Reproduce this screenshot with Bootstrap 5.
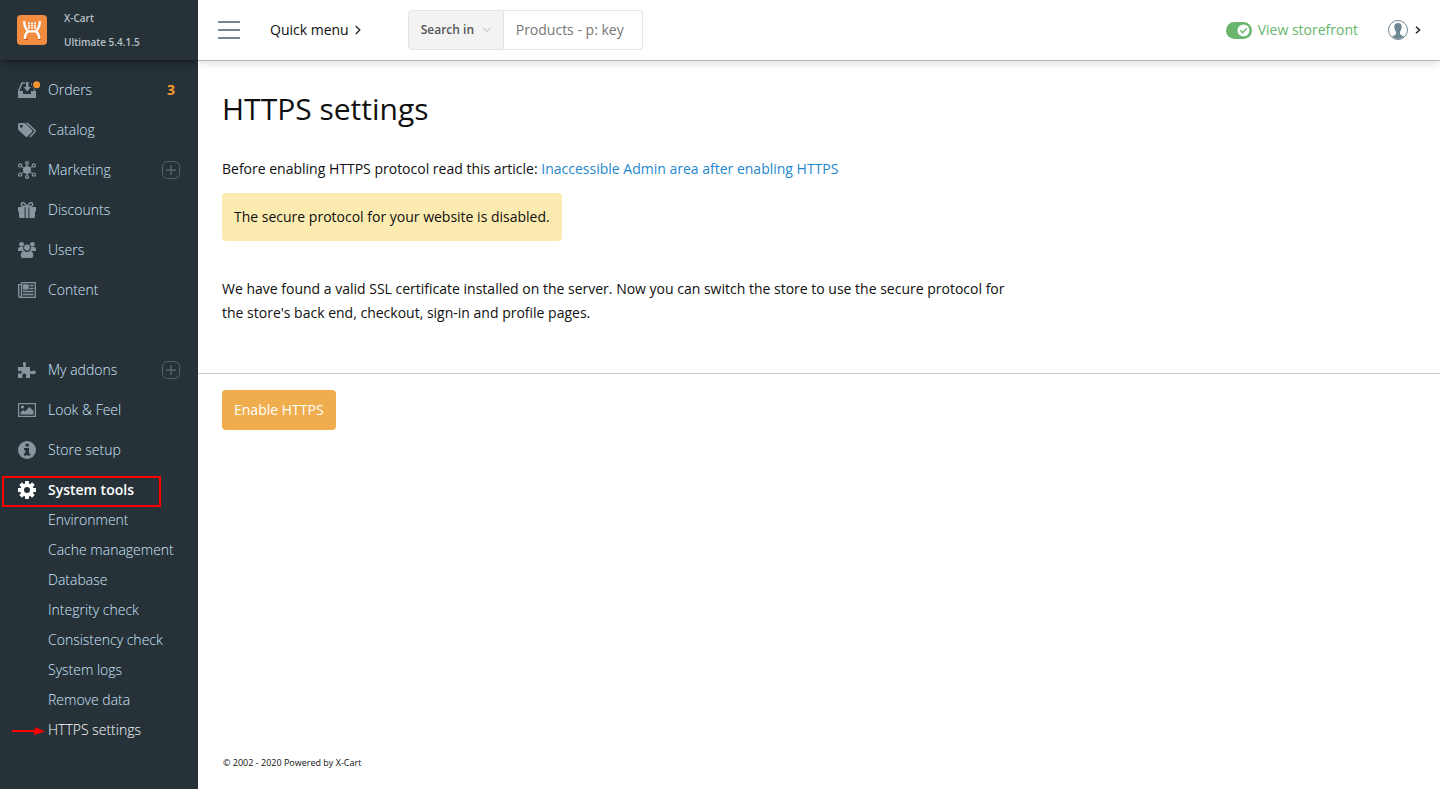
<!DOCTYPE html>
<html lang="en">
<head>
<meta charset="utf-8">
<meta name="viewport" content="width=device-width, initial-scale=1">
<title>HTTPS settings</title>
<link href="https://cdn.jsdelivr.net/npm/bootstrap@5.3.0/dist/css/bootstrap.min.css" rel="stylesheet">
<style>
  body { font-family: "Open Sans", "Noto Sans", sans-serif; font-size: 14px; line-height: 24px; color: #0f0f0f; background: #fff; }
  a { text-decoration: none; }

  /* left menu */
  .side { width: 198px; background: #263238; overflow: hidden; z-index: 1; }
  .side-head { height: 60px; padding: 0 17px; gap: 17px; box-shadow: 0 2px 8px rgba(0,0,0,.5); font-size: 10px; font-weight: 600; color: #b7c0c9; }
  .side-menu { padding-top: 10px; }
  .side-link { height: 40px; padding: 0 18px; gap: 12px; color: #cfe5fd; font-weight: 300; }
  .side-link:hover, .sub-link:hover { color: #fff; }
  .side-link svg { color: #8a949e; }
  .side-link .inbox { margin-right: -5px; }
  .side-link .plus { color: #56636b; }
  .side-link.current { color: #fff; font-weight: 600; }
  .side-link.current svg { color: #fff; }
  .count { color: #f69c31; font-weight: 700; padding-right: 5px; }
  .second { margin-top: 40px; }
  .sub-menu { margin-top: -5px; }
  .sub-link { height: 30px; padding-left: 48px; color: #cfe5fd; font-weight: 300; }
  .sub-link.current { color: #fff; }
  .callout-box { left: 2px; top: 6px; width: 159px; height: 31px; border: 2px solid #f00; pointer-events: none; }
  .callout-arrow { left: 12px; top: 11px; }

  /* top bar */
  .topbar { height: 61px; padding: 0 20px; border-bottom: 1px solid #b5b5b5; box-shadow: 0 2px 8px rgba(0,0,0,.14); }
  .plain-btn { border: 0; padding: 0; background: none; color: inherit; }
  .quick { gap: 6px; margin-left: 30px; margin-right: 47px; }
  .search { width: 235px; height: 40px; }
  .search-in { width: 96px; padding: 0 12px; border: 1px solid #e5e5e5; border-radius: 4px 0 0 4px; background: #f3f3f3; color: #555; font-size: 12px; font-weight: 600; }
  .search-text { min-width: 0; padding: 0 12px; border: 1px solid #e5e5e5; border-left: 0; border-radius: 0 4px 4px 0; color: #333; }
  .search-text::placeholder { color: #777; opacity: 1; }
  .storefront { color: #69b56e; gap: 6px; margin-right: 30px; }

  /* page */
  .page { padding: 30px 24px 48px; }
  .page-title { font-size: 30px; line-height: 36px; font-weight: 400; margin-bottom: 30px; }
  .page p { max-width: 800px; margin-bottom: 12px; }
  .page a { color: #1f87cc; }
  .notice { width: fit-content; padding: 12px; border-radius: 4px; background: #fcebb0; margin-bottom: 36px; }
  .page .found { margin-bottom: 0; }
  .actions { border-top: 1px solid #c6c6c6; padding: 16px 24px; }
  .enable { height: 40px; padding: 0 12px; border: 0; border-radius: 4px; background: #f0ad4e; color: #fff; font-size: 14px; line-height: 20px; }
  .enable:hover { background: #ec9c2e; color: #fff; }
  .foot { padding: 0 25px 14px; font-size: 9px; }
</style>
</head>
<body>
<div class="d-flex min-vh-100">

  <aside class="side flex-shrink-0 position-relative">
    <div class="side-head d-flex align-items-center">
      <svg width="30" height="30" viewBox="0 0 30 30" aria-hidden="true">
        <rect width="30" height="30" rx="4" fill="#f28c40"/>
        <path d="M7.300 23.500h3.200v1.500H6.500zM20.500 23.500h3l.5 1.500h-3z" fill="#b45c30"/>
        <path d="M7.200 6.200Q7.200 12 10.500 15.500M22.800 6.200Q22.800 12 19.500 15.500M9.500 16.400h11M10.800 16.800Q7.800 19 7.800 24M19.200 16.800Q22.200 19 22.200 24" fill="none" stroke="#fff" stroke-width="2.300"/>
        <path d="M11 8.200h8M11 10.600h8M11 13h8" stroke="#fff" stroke-width="1.600" stroke-dasharray="2 1"/>
      </svg>
      <div>X-Cart<br>Ultimate 5.4.1.5</div>
    </div>

    <nav class="side-menu" aria-label="Main">
      <a href="#" class="side-link d-flex align-items-center">
        <svg class="inbox" width="23" height="18" viewBox="0 0 23 18" fill="currentColor">
          <path d="M0 10h5v3h8v-3h5v7H0z"/>
          <path d="M.7 10L4 2h3M13.500 2.500l3.500 7" fill="none" stroke="currentColor" stroke-width="1.500"/>
          <path d="M8 1h2.500v5H13l-3.800 4.500L5.500 6H8z"/>
          <circle cx="18.600" cy="3.800" r="4.800" fill="#263238"/><circle cx="18.600" cy="3.800" r="3.500" fill="#f69331"/>
        </svg>
        <span>Orders</span><span class="count ms-auto">3</span>
      </a>
      <a href="#" class="side-link d-flex align-items-center">
        <svg width="18" height="18" viewBox="0 0 18 18" fill="currentColor">
          <path fill-rule="evenodd" d="M0 3.500Q0 2 1.500 2H6q1 0 2 1l6 6q1 1 0 2l-4.500 4.500q-1 1-2 0L1 9.500Q0 8.500 0 7.500zM3.300 3.700a1.500 1.500 0 1 0 .01 0z"/>
          <path d="M8.500 2.200q1 0 2 1l6.200 6q1 1 0 1.900l-4.600 4.800" fill="none" stroke="currentColor" stroke-width="1.500"/>
        </svg>
        <span>Catalog</span>
      </a>
      <a href="#" class="side-link d-flex align-items-center">
        <svg width="18" height="18" viewBox="0 0 18 18" fill="none" stroke="currentColor">
          <path d="M9 3v12M3.500 5.500l11 7M14.500 5.500l-11 7"/>
          <circle cx="9" cy="9" r="3.600" fill="currentColor"/>
          <g stroke-width="1.200"><circle cx="9" cy="2" r="1.400"/><circle cx="9" cy="16" r="1.400"/><circle cx="2.200" cy="4.400" r="1.600"/><circle cx="15.800" cy="4.400" r="1.600"/><circle cx="2.200" cy="13.600" r="1.600"/><circle cx="15.800" cy="13.600" r="1.600"/></g>
        </svg>
        <span>Marketing</span>
        <svg class="plus ms-auto" width="18" height="18" viewBox="0 0 18 18" fill="none" stroke="currentColor"><rect x=".5" y=".5" width="17" height="17" rx="5"/><path d="M9 4v10M4 9h10" stroke-width="1.400"/></svg>
      </a>
      <a href="#" class="side-link d-flex align-items-center">
        <svg width="18" height="18" viewBox="0 0 18 18" fill="currentColor">
          <path d="M0 6h18v4.500H0zM1 10h6v7H2.500Q1 17 1 15.500zM11 10h6v5.500q0 1.500-1.500 1.500H11z"/>
          <path d="M6.600 6h4.800v11H6.600z" fill="#263238"/><path d="M7.600 6h2.800v11H7.600z"/>
          <path d="M9 6Q7 1.500 5 1.700 3 2 3.300 4 3.700 5.600 9 5.800M9 6q2-4.500 4-4.300 2 .3 1.700 2.300-.4 1.600-5.700 1.800" fill="none" stroke="currentColor" stroke-width="1.400"/>
        </svg>
        <span>Discounts</span>
      </a>
      <a href="#" class="side-link d-flex align-items-center">
        <svg width="18" height="18" viewBox="0 0 18 18" fill="currentColor">
          <circle cx="3.600" cy="3.300" r="2.400"/><circle cx="14.400" cy="3.300" r="2.400"/>
          <path d="M0 10V8q0-2 2-2h3q0 2 1 4zM18 10V8q0-2-2-2h-3q0 2-1 4z"/>
          <circle cx="9" cy="6.500" r="3.400" stroke="#263238" stroke-width=".7"/>
          <path d="M2.700 15q0-5 3.500-5Q9 12 11.800 10q3.500 0 3.500 5 0 2-2 2H4.700q-2 0-2-2z"/>
        </svg>
        <span>Users</span>
      </a>
      <a href="#" class="side-link d-flex align-items-center">
        <svg width="18" height="18" viewBox="0 0 18 18" fill="none" stroke="currentColor" stroke-width="1.300">
          <path d="M3.500 1.700h13.800v14.600H2Q.7 16.300.7 15V3.700h2M3.500 1.700V15q0 1-1.300 1.200"/>
          <rect x="5.500" y="4" width="4.500" height="4" fill="currentColor"/><path d="M11.500 4.500h4M11.500 7.500h4M5 10.500h10.500M5 13.500h10.500"/>
        </svg>
        <span>Content</span>
      </a>

      <a href="#" class="side-link second d-flex align-items-center">
        <svg width="18" height="18" viewBox="0 0 18 18" fill="currentColor">
          <path d="M0 6h5.300Q6 4.800 5 3.800 4.200 1.500 6.300 1q2.300.3 1.700 2.700Q7 4.800 7.800 6H12v4q1 .8 2.200 0 3.200-1.300 3.700 1.300-.2 2.500-3.500 1.700Q13 12.300 12 13v4H8.200q-.8-1.300 0-2.300.5-2-2-2.200-2.400.2-2 2.200.9 1 .1 2.300H0v-4.500q1.200-.7 2 .2 1.500.3 1.600-1.500-.2-1.700-1.700-1.300Q1 10.500 0 9.800z"/>
        </svg>
        <span>My addons</span>
        <svg class="plus ms-auto" width="18" height="18" viewBox="0 0 18 18" fill="none" stroke="currentColor"><rect x=".5" y=".5" width="17" height="17" rx="5"/><path d="M9 4v10M4 9h10" stroke-width="1.400"/></svg>
      </a>
      <a href="#" class="side-link d-flex align-items-center">
        <svg width="18" height="18" viewBox="0 0 18 18" fill="currentColor">
          <rect x=".6" y="2.600" width="16.800" height="12.800" fill="none" stroke="currentColor" stroke-width="1.200"/>
          <circle cx="4.500" cy="6" r="1.600"/><path d="M2.500 13.500v-2L5 9l2 1.500L11.500 6l4 4v3.500z"/>
        </svg>
        <span>Look &amp; Feel</span>
      </a>
      <a href="#" class="side-link d-flex align-items-center">
        <svg width="18" height="18" viewBox="0 0 18 18">
          <circle cx="9" cy="9" r="9" fill="currentColor"/>
          <path d="M7.500 2.800h3.400v2.700H7.500zM6 7h5v5.500h1.300v2H5.900v-2h1.300V9H6z" fill="#263238"/>
        </svg>
        <span>Store setup</span>
      </a>
      <a href="#" class="side-link current d-flex align-items-center position-relative">
        <svg width="18" height="18" viewBox="0 0 18 18" fill="none" stroke="currentColor">
          <circle cx="9" cy="9" r="4.900" stroke-width="3.800"/>
          <path d="M9 0v3M9 15v3M0 9h3M15 9h3M2.600 2.600l2.200 2.200M13.200 13.200l2.200 2.200M2.600 15.400l2.200-2.200M13.200 4.800l2.200-2.200" stroke-width="3.800"/>
        </svg>
        <span>System tools</span>
        <span class="callout-box position-absolute"></span>
      </a>
      <div class="sub-menu">
        <a href="#" class="sub-link d-flex align-items-center">Environment</a>
        <a href="#" class="sub-link d-flex align-items-center">Cache management</a>
        <a href="#" class="sub-link d-flex align-items-center">Database</a>
        <a href="#" class="sub-link d-flex align-items-center">Integrity check</a>
        <a href="#" class="sub-link d-flex align-items-center">Consistency check</a>
        <a href="#" class="sub-link d-flex align-items-center">System logs</a>
        <a href="#" class="sub-link d-flex align-items-center">Remove data</a>
        <a href="#" class="sub-link current d-flex align-items-center position-relative">HTTPS settings
          <svg class="callout-arrow position-absolute" width="33" height="10" viewBox="0 0 33 10" fill="#f00" aria-hidden="true"><path d="M0 4h23V1l10 4.500L22 9V6H0z"/></svg>
        </a>
      </div>
    </nav>
  </aside>

  <div class="flex-grow-1 d-flex flex-column">
    <header class="topbar d-flex align-items-center">
      <button type="button" class="plain-btn d-flex" aria-label="Toggle menu">
        <svg width="22" height="18" viewBox="0 0 22 18" stroke="#6f8795" stroke-width="2"><path d="M0 1h22M0 9h22M0 17h22"/></svg>
      </button>
      <button type="button" class="plain-btn quick d-flex align-items-center">Quick menu
        <svg width="6" height="10" viewBox="0 0 6 10" fill="none" stroke="#222" stroke-width="1.300"><path d="M.8 1l4 4-4 4"/></svg>
      </button>
      <form class="search d-flex">
        <button type="button" class="search-in flex-shrink-0 d-flex align-items-center justify-content-between text-nowrap">Search in
          <svg width="8" height="6" viewBox="0 0 8 6" fill="none" stroke="#a9b1bd"><path d="M.5 1L4 4.500 7.500 1"/></svg>
        </button>
        <input type="text" class="search-text flex-grow-1" placeholder="Products - p: key" aria-label="Search products">
      </form>
      <a href="#" class="storefront d-flex align-items-center ms-auto">
        <svg width="26" height="17" viewBox="0 0 26 17"><rect width="26" height="17" rx="8.500" fill="#69b56e"/><circle cx="17.500" cy="8.500" r="6" fill="#fff"/><path d="M14.300 8.300l2.400 2.400 4-4.400" fill="none" stroke="#69b56e" stroke-width="1.300"/></svg>
        View storefront
      </a>
      <button type="button" class="plain-btn d-flex align-items-center gap-2" aria-label="Account">
        <svg width="20" height="20" viewBox="0 0 20 20"><circle cx="10" cy="10" r="9.500" fill="#fff" stroke="#6f8795"/><path d="M10 3q4 0 3.700 4.500Q13 10.500 12 12q-.3 2.500 1 3l3 1.500q-6 5-12 0L7 15q1.300-.5 1-3Q7 10.500 6.300 7.500 6 3 10 3z" fill="#6f8795"/></svg>
        <svg width="4" height="8" viewBox="0 0 4 8" fill="none" stroke="#222" stroke-width="1.500" overflow="visible"><path d="M0 .7L3.600 4 0 7.300"/></svg>
      </button>
    </header>

    <main>
      <div class="page">
        <h1 class="page-title">HTTPS settings</h1>
        <p>Before enabling HTTPS protocol read this article: <a href="#">Inaccessible Admin area after enabling HTTPS</a></p>
        <div class="notice">The secure protocol for your website is disabled.</div>
        <p class="found">We have found a valid SSL certificate installed on the server. Now you can switch the store to use the secure protocol for the store's back end, checkout, sign-in and profile pages.</p>
      </div>
      <div class="actions"><button type="button" class="btn enable">Enable HTTPS</button></div>
    </main>

    <footer class="foot mt-auto">© 2002 - 2020 Powered by X-Cart</footer>
  </div>
</div>
<script src="https://cdn.jsdelivr.net/npm/bootstrap@5.3.0/dist/js/bootstrap.bundle.min.js"></script>
</body>
</html>
